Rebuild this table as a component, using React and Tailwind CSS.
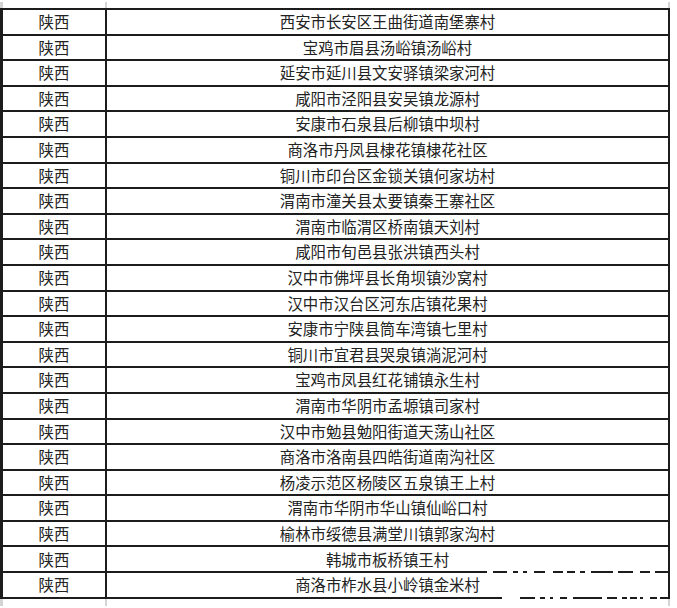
const ROWS = [
  '西安市长安区王曲街道南堡寨村',
  '宝鸡市眉县汤峪镇汤峪村',
  '延安市延川县文安驿镇梁家河村',
  '咸阳市泾阳县安吴镇龙源村',
  '安康市石泉县后柳镇中坝村',
  '商洛市丹凤县棣花镇棣花社区',
  '铜川市印台区金锁关镇何家坊村',
  '渭南市潼关县太要镇秦王寨社区',
  '渭南市临渭区桥南镇天刘村',
  '咸阳市旬邑县张洪镇西头村',
  '汉中市佛坪县长角坝镇沙窝村',
  '汉中市汉台区河东店镇花果村',
  '安康市宁陕县筒车湾镇七里村',
  '铜川市宜君县哭泉镇淌泥河村',
  '宝鸡市凤县红花铺镇永生村',
  '渭南市华阴市孟塬镇司家村',
  '汉中市勉县勉阳街道天荡山社区',
  '商洛市洛南县四皓街道南沟社区',
  '杨凌示范区杨陵区五泉镇王上村',
  '渭南市华阴市华山镇仙峪口村',
  '榆林市绥德县满堂川镇郭家沟村',
  '韩城市板桥镇王村',
  '商洛市柞水县小岭镇金米村',
]

// watermark gaps eating the bottom line of the last two rows: [x1, x2] in page px
const GAPS = {
  '韩城市板桥镇王村': [[487, 493], [507, 513], [518, 523], [527, 534], [545, 553], [563, 567], [575, 580], [585, 591], [613, 618], [633, 640], [650, 655]],
  '商洛市柞水县小岭镇金米村': [[502, 520], [535, 540], [545, 550], [553, 560], [567, 573], [602, 607], [617, 622], [627, 630], [637, 640], [643, 650], [657, 660]],
}

function Stubs({ className }) {
  return (
    <div className={`w-[670px] flex border-l-[3px] border-r-2 border-[#d4d4d4] ${className}`}>
      <div className="w-[104px] border-r-2 border-[#d4d4d4]" />
    </div>
  )
}

export default function App() {
  return (
    <div
      className="w-[677px] h-[608px] bg-white overflow-hidden text-[#222] text-[15.4px]"
      style={{ fontFamily: '"Noto Sans CJK SC", "Noto Sans", sans-serif' }}
    >
      <Stubs className="h-[6px] mt-[2px]" />
      <div className="w-[670px] border-t-2 border-l-[3px] border-r-2 border-[#1c1c1c]">
        {ROWS.map((place) => (
          <div key={place} className="relative flex h-[25.6px] border-b-2 border-[#1c1c1c] box-border">
            <div className="w-[104px] flex items-center justify-center leading-none border-r-2 border-[#1c1c1c]">
              陕西
            </div>
            <div className="flex-1 flex items-center justify-center leading-none">{place}</div>
            {(GAPS[place] || []).map(([a, b]) => (
              <span
                key={a}
                className="absolute bottom-[-2px] h-[2px] bg-white"
                style={{ left: a - 3, width: b - a }}
              />
            ))}
          </div>
        ))}
      </div>
      <Stubs className="h-[7px]" />
    </div>
  )
}
